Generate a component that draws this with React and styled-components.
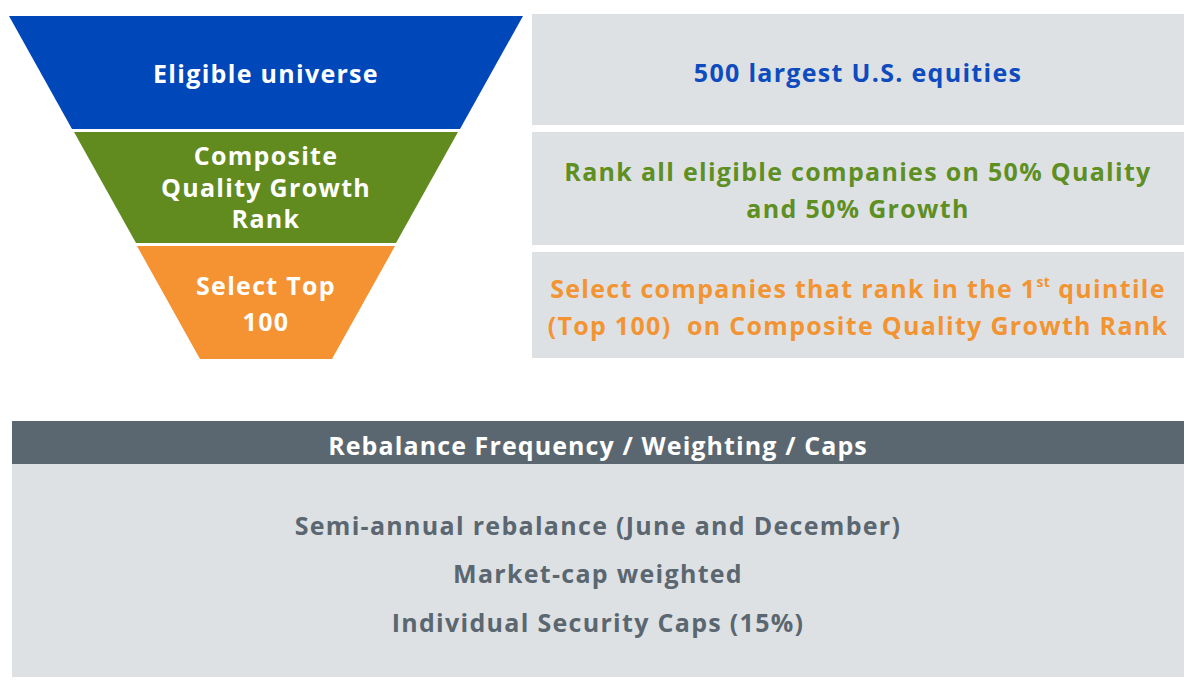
import React from 'react';
import styled, { createGlobalStyle } from 'styled-components';

const GlobalStyle = createGlobalStyle`
  html, body {
    margin: 0;
    padding: 0;
    background: #fff;
  }

  body {
    font-family: 'Open Sans', 'Liberation Sans', sans-serif;
    font-weight: 700;
    font-size: 25px;
    letter-spacing: 1.3px;
  }
`;

const Page = styled.div`
  width: 1200px;
  height: 693px;
  box-sizing: border-box;
  padding: 14px 16px 0 9px;
  display: flex;
  flex-direction: column;
`;

const TopRow = styled.div`
  display: grid;
  grid-template-columns: 514px 1fr;
  column-gap: 9px;
`;

const Funnel = styled.div`
  display: flex;
  flex-direction: column;
  gap: 3px;
  margin-top: 2px;
`;

// each band is a slice of the same inverted triangle
const Band = styled.div`
  height: ${p => p.$height}px;
  background: ${p => p.$color};
  clip-path: polygon(
    ${p => p.$top}px 0,
    calc(100% - ${p => p.$top}px) 0,
    calc(100% - ${p => p.$bottom}px) 100%,
    ${p => p.$bottom}px 100%
  );
  display: flex;
  align-items: center;
  justify-content: center;
  text-align: center;
  color: #fff;
  line-height: ${p => p.$lh}px;
`;

const Steps = styled.div`
  display: flex;
  flex-direction: column;
  gap: 7px;
`;

const Step = styled.div`
  height: ${p => p.$height}px;
  background: #dee1e4;
  display: flex;
  align-items: center;
  justify-content: center;
  text-align: center;
  color: ${p => p.$color};
  line-height: 37px;
  padding-top: ${p => p.$shift || 0}px;
  box-sizing: border-box;

  sup {
    font-size: 14px;
    letter-spacing: 0.5px;
    line-height: 0;
    position: relative;
    top: -2px;
  }
`;

const Panel = styled.section`
  margin: 62px 0 0 3px;
  background: #dee1e4;
`;

const PanelHeader = styled.h2`
  margin: 0;
  height: 43px;
  padding-top: 4px;
  box-sizing: border-box;
  background: #5b6770;
  color: #fff;
  font-size: 25px;
  letter-spacing: 1.1px;
  font-weight: 700;
  display: flex;
  align-items: center;
  justify-content: center;
`;

const PanelBody = styled.ul`
  list-style: none;
  margin: 0;
  height: 213px;
  padding: 6px 0 0;
  box-sizing: border-box;
  display: flex;
  flex-direction: column;
  align-items: center;
  justify-content: center;
  color: #5b6770;
  line-height: 48.5px;
`;

const bands = [
  { color: '#0047ba', height: 113, top: 0, bottom: 63, lh: 30, text: ['Eligible universe'] },
  { color: '#628b1f', height: 111, top: 65, bottom: 127, lh: 31.5, text: ['Composite', 'Quality Growth', 'Rank'] },
  { color: '#f59232', height: 113, top: 128, bottom: 191, lh: 36, text: ['Select Top', '100'] },
];

const App = () => {
  return (
    <>
      <GlobalStyle />
      <Page>
        <TopRow>
          <Funnel>
            {bands.map(b => (
              <Band key={b.color} $color={b.color} $height={b.height} $top={b.top} $bottom={b.bottom} $lh={b.lh}>
                <div>
                  {b.text.map(line => (
                    <div key={line}>{line}</div>
                  ))}
                </div>
              </Band>
            ))}
          </Funnel>
          <Steps>
            <Step $height={111} $color="#0d4bbf" $shift={5}>
              500 largest U.S. equities
            </Step>
            <Step $height={113} $color="#5e8f22" $shift={3}>
              <div>
                Rank all eligible companies on 50% Quality
                <br />
                and 50% Growth
              </div>
            </Step>
            <Step $height={106} $color="#f39433" $shift={4}>
              <div>
                Select companies that rank in the 1<sup>st</sup> quintile
                <br />
                (Top 100)&nbsp; on Composite Quality Growth Rank
              </div>
            </Step>
          </Steps>
        </TopRow>
        <Panel>
          <PanelHeader>Rebalance Frequency / Weighting / Caps</PanelHeader>
          <PanelBody>
            <li>Semi-annual rebalance (June and December)</li>
            <li>Market-cap weighted</li>
            <li>Individual Security Caps (15%)</li>
          </PanelBody>
        </Panel>
      </Page>
    </>
  );
};

export default App;
